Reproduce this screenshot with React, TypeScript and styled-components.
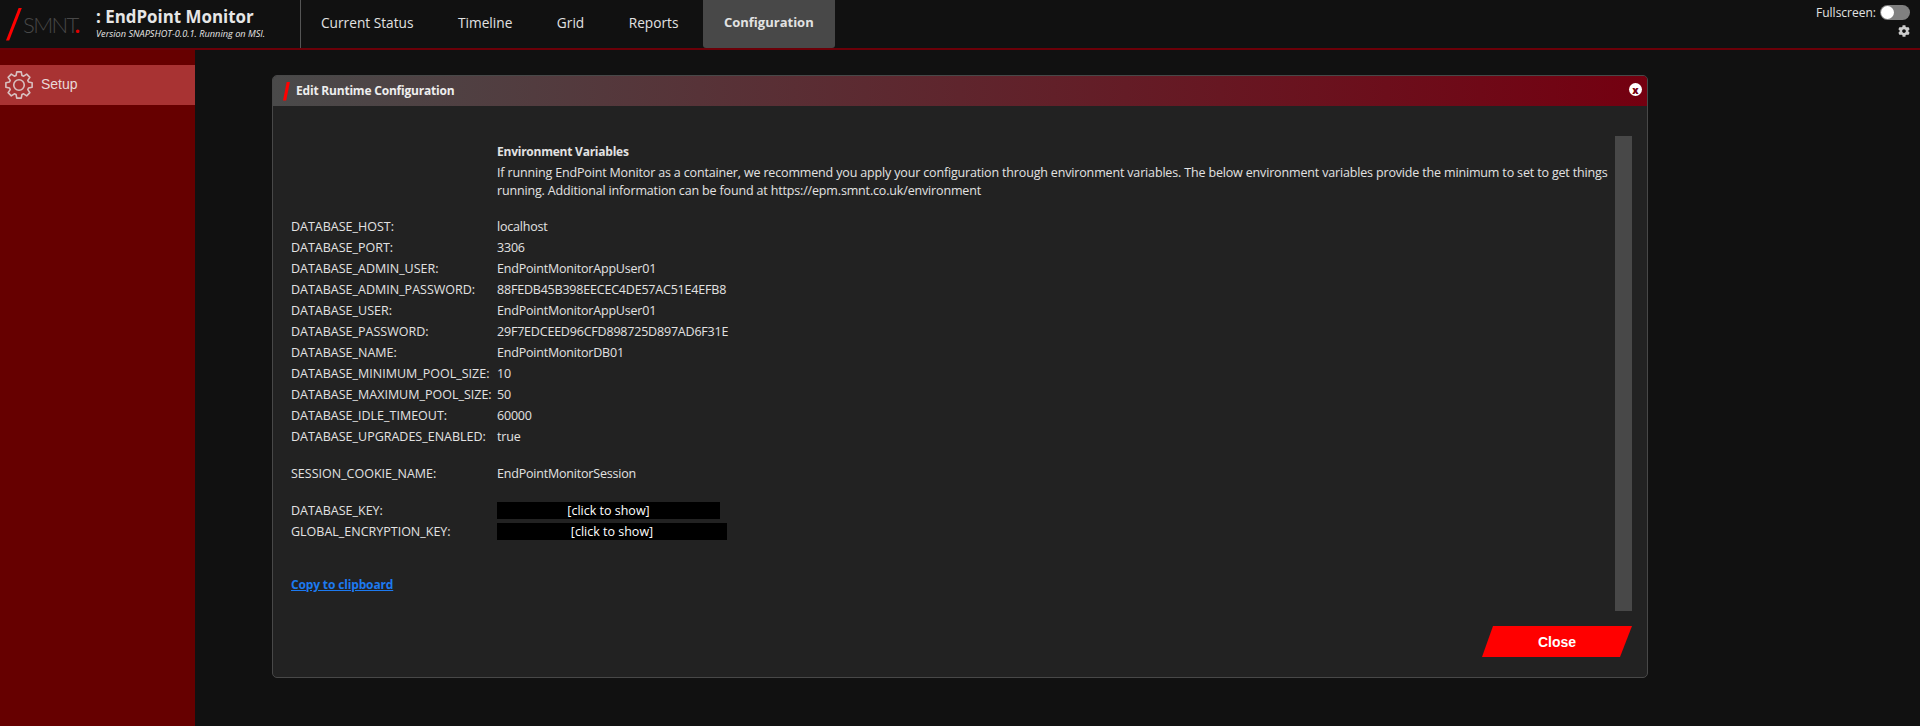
import React from 'react'
import styled, { createGlobalStyle } from 'styled-components';
import { FaCog } from 'react-icons/fa';

const GlobalStyle = createGlobalStyle`
    html, body {
        margin: 0;
        height: 100%;
        background: #111111;
        overflow: hidden;
    }
    * {
        box-sizing: border-box;
    }
`;

const generalVars = [
    ['DATABASE_HOST:', 'localhost'],
    ['DATABASE_PORT:', '3306'],
    ['DATABASE_ADMIN_USER:', 'EndPointMonitorAppUser01'],
    ['DATABASE_ADMIN_PASSWORD:', '88FEDB45B398EECEC4DE57AC51E4EFB8'],
    ['DATABASE_USER:', 'EndPointMonitorAppUser01'],
    ['DATABASE_PASSWORD:', '29F7EDCEED96CFD898725D897AD6F31E'],
    ['DATABASE_NAME:', 'EndPointMonitorDB01'],
    ['DATABASE_MINIMUM_POOL_SIZE:', '10'],
    ['DATABASE_MAXIMUM_POOL_SIZE:', '50'],
    ['DATABASE_IDLE_TIMEOUT:', '60000'],
    ['DATABASE_UPGRADES_ENABLED:', 'true'],
];

const navItems = ['Current Status', 'Timeline', 'Grid', 'Reports', 'Configuration'];

// eight square teeth round a centre of 16,16
function gearPath() {
    const outer = 14.2;
    const inner = 10.6;
    const points: string[] = [];
    for (let i = 0; i < 8; i++) {
        const mid = (i * Math.PI) / 4;
        const steps: [number, number][] = [
            [inner, mid - 0.3],
            [outer, mid - 0.17],
            [outer, mid + 0.17],
            [inner, mid + 0.3],
        ];
        steps.forEach(([r, a]) => {
            points.push(`${(16 + r * Math.cos(a)).toFixed(2)} ${(16 + r * Math.sin(a)).toFixed(2)}`);
        });
    }
    return `M${points.join('L')}Z`;
}

function SetupIcon() {
    return (
        <svg width="30" height="30" viewBox="0 0 32 32" fill="none" stroke="#d8c0c0" strokeWidth="1.7" strokeLinejoin="round">
            <path d={gearPath()} />
            <circle cx="16" cy="16" r="5.6" />
        </svg>
    );
}

export default function App() {
    return (
        <Page>
            <GlobalStyle />
            <Header>
                <LogoBox>
                    <RedSlash $width={16} $height={33} />
                    <LogoText>SMNT<LogoDot>.</LogoDot></LogoText>
                </LogoBox>
                <TitleBox>
                    <AppTitle>: EndPoint Monitor</AppTitle>
                    <AppVersion>Version SNAPSHOT-0.0.1. Running on MSI.</AppVersion>
                </TitleBox>
                <Nav>
                    {navItems.map((item) => (
                        <NavItem key={item} $active={item === 'Configuration'}>{item}</NavItem>
                    ))}
                </Nav>
                <HeaderRight>
                    <FullscreenRow>
                        Fullscreen:
                        <Toggle><ToggleKnob /></Toggle>
                    </FullscreenRow>
                    <FaCog size={12} color="#cccccc" />
                </HeaderRight>
            </Header>
            <Main>
                <Sidebar>
                    <SideItem>
                        <SetupIcon />
                        <SideLabel>Setup</SideLabel>
                    </SideItem>
                </Sidebar>
                <Content>
                    <Modal>
                        <ModalHead>
                            <RedSlash $width={7} $height={19} />
                            <ModalTitle>Edit Runtime Configuration</ModalTitle>
                            <CloseDot>x</CloseDot>
                        </ModalHead>
                        <ModalBody>
                            <ScrollArea>
                                <IntroBlock>
                                    <IntroTitle>Environment Variables</IntroTitle>
                                    <IntroText>
                                        If running EndPoint Monitor as a container, we recommend you apply your configuration through environment variables. The below environment variables provide the minimum to set to get things running. Additional information can be found at https://epm.smnt.co.uk/environment
                                    </IntroText>
                                </IntroBlock>
                                <VarGroup>
                                    {generalVars.map(([name, value]) => (
                                        <VarRow key={name}>
                                            <span>{name}</span>
                                            <VarValue>{value}</VarValue>
                                        </VarRow>
                                    ))}
                                </VarGroup>
                                <VarGroup>
                                    <VarRow>
                                        <span>SESSION_COOKIE_NAME:</span>
                                        <VarValue>EndPointMonitorSession</VarValue>
                                    </VarRow>
                                </VarGroup>
                                <VarGroup>
                                    <VarRow>
                                        <span>DATABASE_KEY:</span>
                                        <HiddenValue $width={223}>[click to show]</HiddenValue>
                                    </VarRow>
                                    <VarRow>
                                        <span>GLOBAL_ENCRYPTION_KEY:</span>
                                        <HiddenValue $width={230}>[click to show]</HiddenValue>
                                    </VarRow>
                                </VarGroup>
                                <CopyLink href="#">Copy to clipboard</CopyLink>
                            </ScrollArea>
                            <ScrollBar />
                        </ModalBody>
                        <ModalFoot>
                            <CloseButton>Close</CloseButton>
                        </ModalFoot>
                    </Modal>
                </Content>
            </Main>
        </Page>
    )
}

const uiFont = `"Open Sans", "Noto Sans", sans-serif`;

const Page = styled.div`
    display: flex;
    flex-direction: column;
    height: 100vh;
    font-family: ${uiFont};
    color: #e2e2e2;
`;

const Header = styled.header`
    display: flex;
    height: 50px;
    flex-shrink: 0;
    background: #111111;
    border-bottom: 2px solid #6b0008;
`;

const LogoBox = styled.div`
    display: flex;
    align-items: center;
    width: 96px;
    padding: 0 0 0 6px;
`;

const RedSlash = styled.i<{ $width: number; $height: number }>`
    display: block;
    flex-shrink: 0;
    width: ${(p) => p.$width}px;
    height: ${(p) => p.$height}px;
    background: #ff0000;
    clip-path: polygon(calc(100% - 3.2px) 0, 100% 0, 3.2px 100%, 0 100%);
`;

const LogoText = styled.div`
    margin-left: 1px;
    font-family: Lato, sans-serif;
    font-weight: 300;
    font-size: 22px;
    letter-spacing: -1.6px;
    color: #484848;
`;

const LogoDot = styled.span`
    color: #e00000;
    font-weight: 700;
    margin-left: -3px;
`;

const TitleBox = styled.div`
    width: 205px;
    padding-top: 6px;
    border-right: 1px solid #555555;
`;

const AppTitle = styled.div`
    font-size: 16.9px;
    line-height: 22px;
    font-weight: 700;
    color: #e6e6e6;
    white-space: nowrap;
`;

const AppVersion = styled.div`
    font-size: 9.2px;
    line-height: 12px;
    font-style: italic;
    font-weight: 500;
    color: #e6e6e6;
    white-space: nowrap;
`;

const Nav = styled.nav`
    display: flex;
    flex: 1;
`;

const NavItem = styled.div<{ $active?: boolean }>`
    display: flex;
    align-items: center;
    height: 48px;
    padding: 0 ${(p) => (p.$active ? 21 : 23.5)}px 4px ${(p) => (p.$active ? 21 : 20)}px;
    margin-right: ${(p) => (p.$active ? 0 : 1)}px;
    font-size: ${(p) => (p.$active ? 13 : 13.7)}px;
    font-weight: ${(p) => (p.$active ? 700 : 400)};
    color: #e2e2e2;
    background: ${(p) => (p.$active ? '#484848' : 'transparent')};
    border-radius: 0 0 3px 3px;
`;

const HeaderRight = styled.div`
    display: flex;
    flex-direction: column;
    align-items: flex-end;
    gap: 5px;
    padding: 5px 10px 0 0;
`;

const FullscreenRow = styled.div`
    display: flex;
    align-items: center;
    gap: 4px;
    font-size: 12px;
    line-height: 15px;
`;

const Toggle = styled.div`
    display: flex;
    align-items: center;
    width: 30px;
    height: 15px;
    padding-left: 1px;
    border-radius: 8px;
    background: #808080;
`;

const ToggleKnob = styled.div`
    width: 13px;
    height: 13px;
    border-radius: 50%;
    background: #ffffff;
`;

const Main = styled.div`
    display: flex;
    flex: 1;
    min-height: 0;
`;

const Sidebar = styled.aside`
    width: 195px;
    flex-shrink: 0;
    padding-top: 15px;
    background: #660000;
`;

const SideItem = styled.div`
    display: flex;
    align-items: center;
    gap: 7px;
    height: 40px;
    padding-left: 4px;
    background: #a83333;
    font-family: "Liberation Sans", Arial, sans-serif;
    font-size: 14px;
    color: #e8d8d8;
`;

const SideLabel = styled.span`
    margin-top: -2px;
`;

const Content = styled.main`
    flex: 1;
    padding: 25px 0 0 77px;
`;

const Modal = styled.section`
    display: flex;
    flex-direction: column;
    width: 1376px;
    height: 603px;
    background: #222222;
    border: 1px solid #484848;
    border-radius: 5px;
    overflow: hidden;
`;

const ModalHead = styled.div`
    display: flex;
    align-items: center;
    gap: 6px;
    height: 30px;
    flex-shrink: 0;
    padding: 0 10px;
    background: linear-gradient(to right, #4a4a4a, #740010);
`;

const ModalTitle = styled.h2`
    flex: 1;
    margin: 0 0 2px;
    font-size: 12px;
    letter-spacing: -0.2px;
    font-weight: 700;
    color: #eeeeee;
`;

const CloseDot = styled.div`
    display: flex;
    align-items: center;
    justify-content: center;
    width: 13px;
    height: 13px;
    margin: 0 -5px 3px 0;
    border-radius: 50%;
    background: #ffffff;
    color: #740010;
    font-size: 10px;
    line-height: 1;
    font-weight: 800;
`;

const ModalBody = styled.div`
    display: flex;
    height: 475px;
    margin: 30px 15px 0 18px;
    flex-shrink: 0;
`;

const ScrollArea = styled.div`
    flex: 1;
    min-width: 0;
    padding-right: 2px;
`;

const ScrollBar = styled.div`
    width: 17px;
    background: #484848;
`;

const IntroBlock = styled.div`
    padding: 6px 0 0 206px;
    font-size: 12.5px;
    line-height: 18px;
    letter-spacing: -0.16px;
`;

const IntroTitle = styled.div`
    font-size: 12px;
    letter-spacing: -0.24px;
    font-weight: 700;
    line-height: 19px;
    margin-bottom: 3px;
`;

const IntroText = styled.div``;

const VarGroup = styled.div`
    display: flex;
    flex-direction: column;
    margin-top: 16px;
    &:first-of-type {
        margin-top: 14px;
    }
`;

const VarRow = styled.div`
    display: grid;
    grid-template-columns: 206px 1fr;
    align-items: center;
    height: 21px;
    font-size: 12.5px;
`;

const VarValue = styled.span`
    letter-spacing: -0.2px;
`;

const HiddenValue = styled.span<{ $width: number }>`
    display: block;
    width: ${(p) => p.$width}px;
    height: 17px;
    line-height: 17px;
    text-align: center;
    background: #000000;
    color: #ffffff;
`;

const CopyLink = styled.a`
    display: block;
    margin-top: 34px;
    font-size: 12px;
    letter-spacing: -0.15px;
    line-height: 18px;
    font-weight: 700;
    color: #1d7af0;
`;

const ModalFoot = styled.div`
    display: flex;
    justify-content: flex-end;
    padding: 15px 15px 0 0;
`;

const CloseButton = styled.button`
    width: 150px;
    height: 31px;
    border: none;
    background: #ff0000;
    color: #ffffff;
    font-family: "Liberation Sans", Arial, sans-serif;
    font-size: 14px;
    font-weight: 700;
    clip-path: polygon(11px 0, 100% 0, calc(100% - 12px) 100%, 0 100%);
`;
